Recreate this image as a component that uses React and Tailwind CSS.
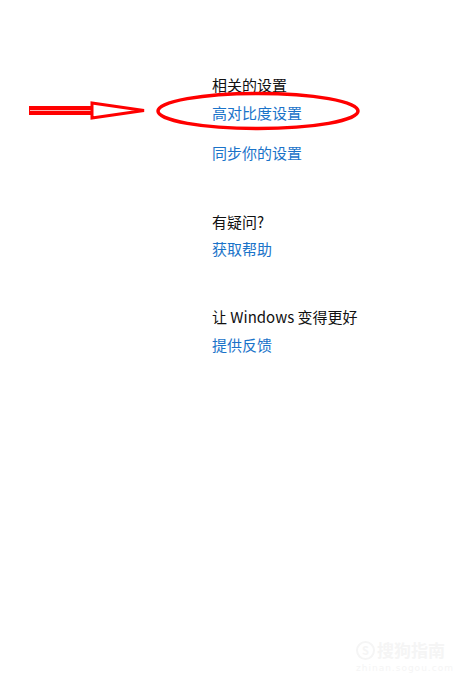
export default function App() {
  const font = { fontFamily: '"Microsoft YaHei", "Noto Sans CJK SC", "Noto Sans", sans-serif' }

  return (
    <div className="relative w-[457px] h-[698px] bg-white overflow-hidden" style={font}>
      <div className="pl-[212px] pt-[75px] text-[15px] leading-[20px]">
        {/* 相关的设置 */}
        <div className="text-[#111]">相关的设置</div>
        <div className="mt-[8px] text-[#1a73c9]">高对比度设置</div>
        <div className="mt-[20px] text-[#1a73c9]">同步你的设置</div>

        {/* 有疑问 */}
        <div className="mt-[49px] text-[#111]">有疑问?</div>
        <div className="mt-[7px] text-[#1a73c9]">获取帮助</div>

        {/* 让 Windows 变得更好 */}
        <div className="mt-[48px] text-[#111]">让 Windows 变得更好</div>
        <div className="mt-[8px] text-[#1a73c9]">提供反馈</div>
      </div>

      {/* annotation: arrow + ellipse */}
      <svg className="absolute left-0 top-0" width="457" height="200" viewBox="0 0 457 200">
        <rect x="29" y="106" width="63" height="9" fill="#ff0000" />
        <line x1="30" y1="110.5" x2="92" y2="110.5" stroke="#ffb3b3" strokeWidth="1" />
        <polygon points="92,103 144,110.5 92,118" fill="#fff" stroke="#ff0000" strokeWidth="3" strokeLinejoin="miter" />
        <ellipse cx="258" cy="111" rx="100" ry="17.5" fill="none" stroke="#ff0000" strokeWidth="3.5" />
      </svg>

      {/* watermark */}
      <div className="absolute left-[356px] top-[640px] flex flex-col items-start text-[#f5f5f5]">
        <div className="flex items-center gap-[2px]">
          <div className="w-[19px] h-[19px] rounded-full border-2 border-[#f5f5f5] flex items-center justify-center text-[11px] font-bold leading-none">
            S
          </div>
          <span className="text-[17px] leading-[20px] font-bold">搜狗指南</span>
        </div>
        <span className="mt-[3px] text-[9px] leading-[10px] tracking-[1px]" style={{ fontFamily: '"DejaVu Sans", sans-serif' }}>
          zhinan.sogou.com
        </span>
      </div>
    </div>
  )
}
